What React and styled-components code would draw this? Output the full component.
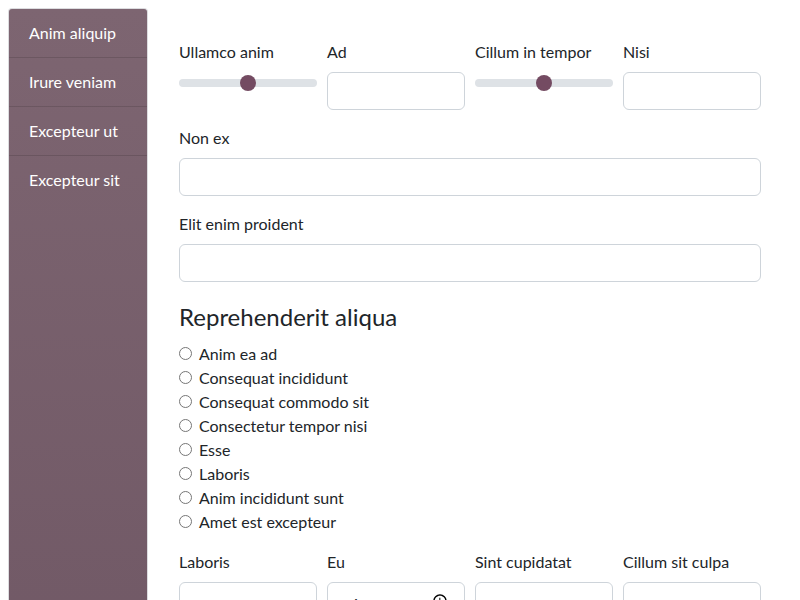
import React from "react";
import styled, { createGlobalStyle } from "styled-components";

const Global = createGlobalStyle`
  html, body { margin: 0; padding: 0; background: #fff; }
  body {
    margin: 8px;
    font-family: Lato, "Noto Sans", sans-serif;
    font-size: 16px;
    line-height: 24px;
    color: #212529;
  }
  * { box-sizing: border-box; }
`;

const Layout = styled.div`
  display: flex;
  align-items: stretch;
  min-height: 700px;
`;

const Sidebar = styled.nav`
  width: 140px;
  flex: none;
  display: flex;
  flex-direction: column;
  background: linear-gradient(180deg, #7d6571 0%, #705865 100%);
  border: 1px solid #dcdcdf;
  border-bottom: none;
  border-radius: 4px 4px 0 0;
`;

const NavItem = styled.a`
  display: block;
  padding: 12px 20px;
  color: #fff;
  text-decoration: none;
  border-bottom: 1px solid rgba(0, 0, 0, 0.13);
  &:last-child { border-bottom: none; }
`;

const Main = styled.main`
  flex: 1;
  padding: 32px 31px 0 31px;
  display: flex;
  flex-direction: column;
  gap: 16px;
`;

const Grid4 = styled.div`
  display: grid;
  grid-template-columns: repeat(4, 1fr);
  column-gap: 10px;
`;

const Field = styled.div`
  display: flex;
  flex-direction: column;
  gap: 8px;
`;

const Label = styled.label`
  display: block;
  color: #212529;
`;

const Input = styled.input`
  width: 100%;
  height: 38px;
  padding: 6px 12px;
  border: 1px solid #ced4da;
  border-radius: 6px;
  font: inherit;
  color: #212529;
  background: #fff;
`;

const Range = styled.input.attrs({ type: "range" })`
  -webkit-appearance: none;
  appearance: none;
  width: 100%;
  height: 22px;
  margin: 0;
  background: transparent;
  &::-webkit-slider-runnable-track {
    height: 8px;
    border-radius: 4px;
    background: #dee2e6;
  }
  &::-webkit-slider-thumb {
    -webkit-appearance: none;
    width: 16px;
    height: 16px;
    margin-top: -4px;
    border-radius: 50%;
    background: #744b62;
    border: none;
  }
`;

const Heading = styled.h4`
  margin: 4px 0 0;
  font-size: 24px;
  font-weight: 400;
  line-height: 29px;
  color: #212529;
`;

const RadioList = styled.div`
  display: flex;
  flex-direction: column;
  margin-top: -5px;
`;

const RadioRow = styled.label`
  display: flex;
  align-items: center;
  height: 24px;
  gap: 7px;
`;

const Radio = styled.input.attrs({ type: "radio" })`
  -webkit-appearance: none;
  appearance: none;
  width: 13px;
  height: 13px;
  margin: 0;
  border: 1px solid #767676;
  border-radius: 50%;
  background: #fff;
  position: relative;
  top: -1px;
`;

const radios = [
  "Anim ea ad",
  "Consequat incididunt",
  "Consequat commodo sit",
  "Consectetur tempor nisi",
  "Esse",
  "Laboris",
  "Anim incididunt sunt",
  "Amet est excepteur",
];

export default function App() {
  return (
    <>
      <Global />
      <Layout>
        <Sidebar>
          <NavItem>Anim aliquip</NavItem>
          <NavItem>Irure veniam</NavItem>
          <NavItem>Excepteur ut</NavItem>
          <NavItem>Excepteur sit</NavItem>
        </Sidebar>
        <Main>
          <Grid4>
            <Field>
              <Label>Ullamco anim</Label>
              <Range defaultValue={50} />
            </Field>
            <Field>
              <Label>Ad</Label>
              <Input type="text" />
            </Field>
            <Field>
              <Label>Cillum in tempor</Label>
              <Range defaultValue={50} />
            </Field>
            <Field>
              <Label>Nisi</Label>
              <Input type="text" />
            </Field>
          </Grid4>
          <Field>
            <Label>Non ex</Label>
            <Input type="text" />
          </Field>
          <Field>
            <Label>Elit enim proident</Label>
            <Input type="text" />
          </Field>
          <Heading>Reprehenderit aliqua</Heading>
          <RadioList>
            {radios.map((r) => (
              <RadioRow key={r}>
                <Radio name="rep" />
                {r}
              </RadioRow>
            ))}
          </RadioList>
          <Grid4>
            <Field>
              <Label>Laboris</Label>
              <Input type="text" />
            </Field>
            <Field>
              <Label>Eu</Label>
              <Input type="time" />
            </Field>
            <Field>
              <Label>Sint cupidatat</Label>
              <Input type="text" />
            </Field>
            <Field>
              <Label>Cillum sit culpa</Label>
              <Input type="text" />
            </Field>
          </Grid4>
        </Main>
      </Layout>
    </>
  );
}
